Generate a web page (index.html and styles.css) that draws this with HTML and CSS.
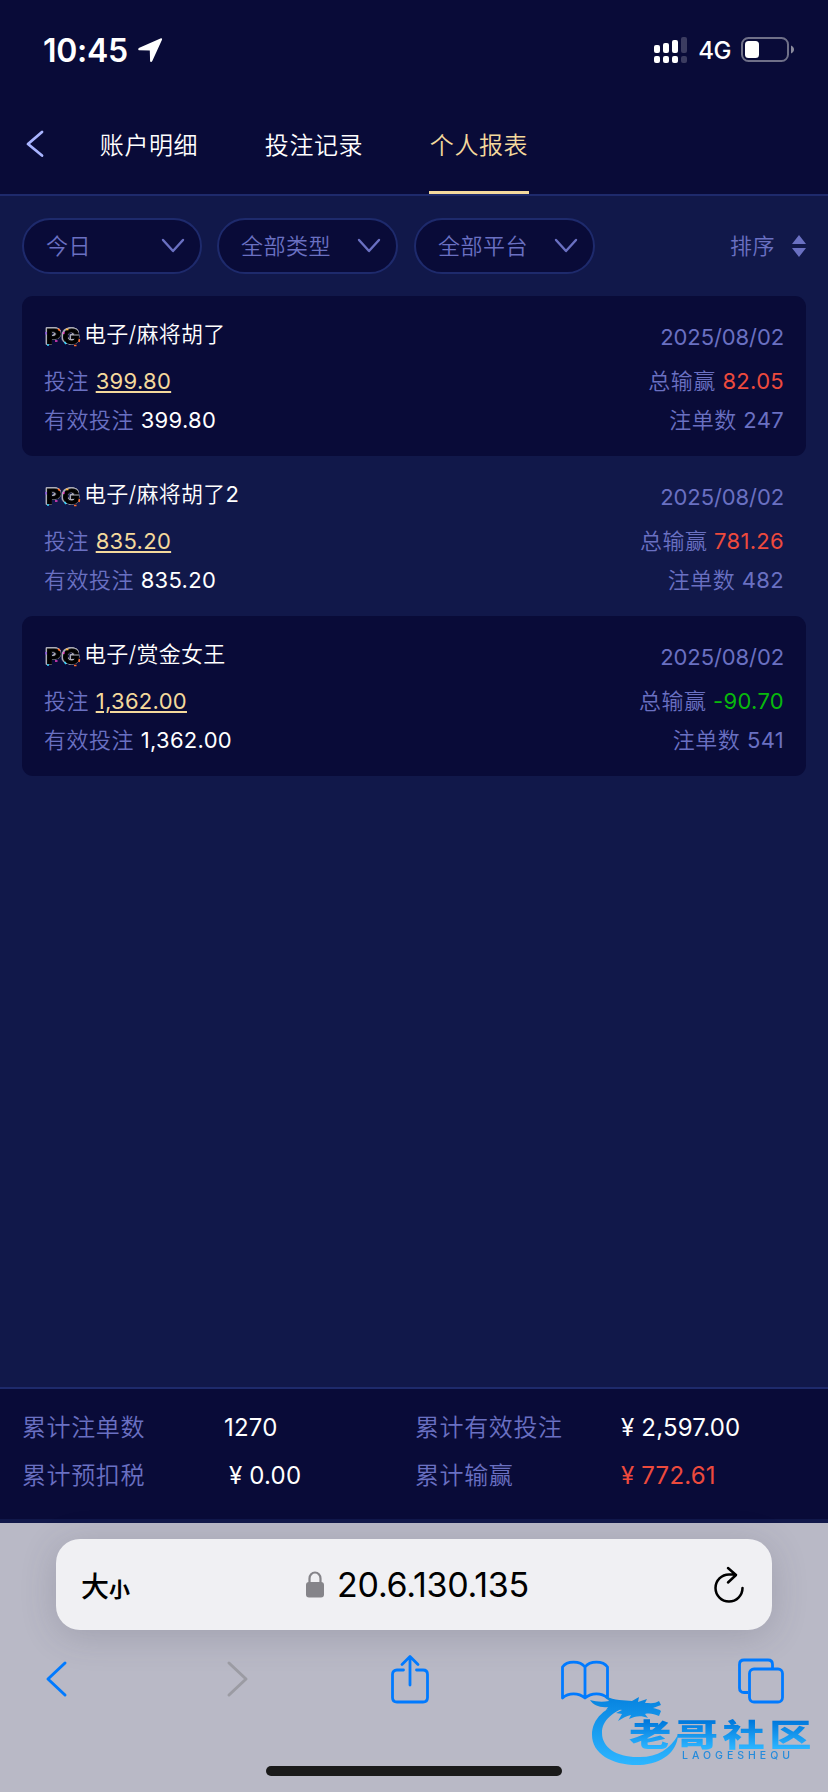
FILE: index.html
```html
<!DOCTYPE html>
<html lang="zh-CN">
<head>
<meta charset="utf-8">
<title>个人报表</title>
<link rel="stylesheet" href="styles.css">
</head>
<body>
<svg class="defs" width="0" height="0" aria-hidden="true">
  <symbol id="sparks" viewBox="0 0 38 22">
    <path d="M2 6v2.500" stroke="#8a4fe0" stroke-width="1.600"/>
    <path d="M14 3l2 1.500M35.500 13l-.500 3M30 19.500h2.500" stroke="#ff6a2a" stroke-width="1.600"/>
    <path d="M3 19h2M20.500 16l1.500 2" stroke="#35d5ff" stroke-width="1.600"/>
    <path d="M11 15h2.500M19.500 8l.500-2" stroke="#f044c4" stroke-width="1.600"/>
    <path d="M22 3.500h2.500" stroke="#ffb03a" stroke-width="1.600"/>
  </symbol>
  <symbol id="down" viewBox="0 0 24 16"><path d="M2 2l10 11L22 2" fill="none" stroke="#6a70c2" stroke-width="2.400" stroke-linecap="round" stroke-linejoin="round"/></symbol>
</svg>

<div class="screen">
  <div class="status">
    <span class="time">10:45</span>
    <svg class="location" width="26" height="26" viewBox="0 0 26 26"><path d="M24 1.200Q25.600 1 25 2.800L15.300 24Q14.500 25.400 13.100 24.600L12.800 13.400L1.800 13.200Q.4 12 1.800 10.900Z" fill="#fff"/></svg>
    <span class="fill"></span>
    <svg class="signal" width="34" height="26" viewBox="0 0 34 26" fill="#fff">
      <rect x="0" y="8" width="6" height="8" rx="2"/><rect x="9" y="6" width="6" height="10" rx="2"/><rect x="18" y="3" width="6" height="13" rx="2"/><rect x="27" y="0" width="6" height="16" rx="2" fill="#3b3c60"/>
      <rect x="0" y="19" width="6" height="7" rx="2"/><rect x="9" y="19" width="6" height="7" rx="2"/><rect x="18" y="19" width="6" height="7" rx="2"/><rect x="27" y="19" width="6" height="7" rx="2" fill="#3b3c60"/>
    </svg>
    <span class="network">4G</span>
    <svg class="battery" width="54" height="26" viewBox="0 0 54 26">
      <rect x="1" y="1" width="46" height="23" rx="6.500" fill="none" stroke="#6f7088" stroke-width="2"/>
      <rect x="4" y="4" width="14" height="17" rx="3.500" fill="#fff"/>
      <path d="M50 8.500c4 1.500 4 6.500 0 8z" fill="#8a8a9c"/>
    </svg>
  </div>

  <nav class="tabs">
    <svg class="back" width="18" height="28" viewBox="0 0 18 28"><path d="M16 2L2 14l14 11.500" fill="none" stroke="#a9b4ff" stroke-width="2.800" stroke-linecap="round" stroke-linejoin="round"/></svg>
    <span class="tab">账户明细</span>
    <span class="tab">投注记录</span>
    <span class="tab active">个人报表</span>
  </nav>

  <div class="filters">
    <div class="pill"><span>今日</span><svg width="24" height="16"><use href="#down"/></svg></div>
    <div class="pill"><span>全部类型</span><svg width="24" height="16"><use href="#down"/></svg></div>
    <div class="pill"><span>全部平台</span><svg width="24" height="16"><use href="#down"/></svg></div>
    <div class="sort"><span>排序</span><svg width="14" height="22" viewBox="0 0 14 22" fill="#6a70c2"><path d="M7 0l7 9H0zM7 22l7-9H0z"/></svg></div>
  </div>

  <main class="list">
    <article class="record dark">
      <div class="left">
        <div class="title"><span class="pg"><i>PG</i><svg width="38" height="22"><use href="#sparks"/></svg></span><span>电子/麻将胡了</span></div>
        <div class="bet">投注 <a>399.80</a></div>
        <div class="valid">有效投注 <b>399.80</b></div>
      </div>
      <div class="right">
        <div class="date">2025/08/02</div>
        <div class="bet">总输赢 <b class="red">82.05</b></div>
        <div class="valid">注单数 <b class="muted">247</b></div>
      </div>
    </article>
    <article class="record">
      <div class="left">
        <div class="title"><span class="pg"><i>PG</i><svg width="38" height="22"><use href="#sparks"/></svg></span><span>电子/麻将胡了<b>2</b></span></div>
        <div class="bet">投注 <a>835.20</a></div>
        <div class="valid">有效投注 <b>835.20</b></div>
      </div>
      <div class="right">
        <div class="date">2025/08/02</div>
        <div class="bet">总输赢 <b class="red">781.26</b></div>
        <div class="valid">注单数 <b class="muted">482</b></div>
      </div>
    </article>
    <article class="record dark">
      <div class="left">
        <div class="title"><span class="pg"><i>PG</i><svg width="38" height="22"><use href="#sparks"/></svg></span><span>电子/赏金女王</span></div>
        <div class="bet">投注 <a>1,362.00</a></div>
        <div class="valid">有效投注 <b>1,362.00</b></div>
      </div>
      <div class="right">
        <div class="date">2025/08/02</div>
        <div class="bet">总输赢 <b class="green">-90.70</b></div>
        <div class="valid">注单数 <b class="muted">541</b></div>
      </div>
    </article>
  </main>

  <section class="summary">
    <span>累计注单数</span><b>1270</b><span>累计有效投注</span><b>¥ 2,597.00</b>
    <span>累计预扣税</span><b class="inset">¥ 0.00</b><span>累计输赢</span><b class="red">¥ 772.61</b>
  </section>

  <footer class="browser">
    <div class="address">
      <span class="size">大<small>小</small></span>
      <span class="url"><svg width="18" height="27" viewBox="0 0 18 27"><path d="M3.500 12V7.500a5.500 6 0 0 1 11 0V12" fill="none" stroke="#858489" stroke-width="2.200"/><rect x="0" y="11" width="18" height="15.500" rx="3" fill="#858489"/></svg>20.6.130.135</span>
      <svg class="reload" width="32" height="38" viewBox="0 0 32 38" fill="none" stroke="#000" stroke-width="2.500" stroke-linecap="round" stroke-linejoin="round"><path d="M29.500 22A13.500 13.500 0 1 1 16 8.500H22.500M15 2l8 7-8 7.500"/></svg>
    </div>
    <div class="toolbar">
      <svg width="24" height="50" viewBox="0 0 24 50"><path d="M20 9L3 25l17 16" fill="none" stroke="#007aff" stroke-width="3" stroke-linecap="round" stroke-linejoin="round"/></svg>
      <svg width="24" height="50" viewBox="0 0 24 50"><path d="M3 9l17 16L3 41" fill="none" stroke="#9b9ba3" stroke-width="3" stroke-linecap="round" stroke-linejoin="round"/></svg>
      <svg width="38" height="50" viewBox="0 0 38 50" fill="none" stroke="#007aff" stroke-width="2.800" stroke-linecap="round" stroke-linejoin="round"><path d="M12.500 16H6q-4.500 0-4.500 4.500v23Q1.500 48 6 48h26q4.500 0 4.500-4.500v-23Q36.500 16 32 16h-6.500M19 31V3M11 10.500L19 2.500l8 8"/></svg>
      <svg width="48" height="50" viewBox="0 0 48 50" fill="none" stroke="#007aff" stroke-width="2.800" stroke-linejoin="round"><path d="M24 13C19 6.500 6 6.500 1.500 13v31c6-5.500 16-5.500 22.500 0 6.500-5.500 16.500-5.500 22.500 0V13C42 6.500 29 6.500 24 13zM24 13v31"/></svg>
      <svg width="46" height="50" viewBox="0 0 46 50" fill="none" stroke="#007aff" stroke-width="2.800"><path d="M10 38.500H6q-4.500 0-4.500-4.500V10.500Q1.500 6 6 6h24q4.500 0 4.500 4.500v4"/><rect x="11.500" y="15" width="33" height="33" rx="4.500"/></svg>
    </div>
    <div class="home"></div>
    <svg class="brand" width="232" height="84" viewBox="0 0 232 84">
      <defs>
        <linearGradient id="wave" gradientUnits="userSpaceOnUse" x1="0" y1="12" x2="0" y2="78"><stop offset="0" stop-color="#0784e0"/><stop offset="1" stop-color="#2cb5ff"/></linearGradient>
        <linearGradient id="word" x1="0" y1="0" x2="0" y2="1"><stop offset=".25" stop-color="#0078dc"/><stop offset=".85" stop-color="#2bb4ff"/></linearGradient>
      </defs>
      <g fill="url(#wave)">
        <path d="M42 17C21 20 8 33 8 49c0 19 21 31 48 30 22-1 37-13 38-30-8 14-20 22-38 22-22 1-38-9-38-24 0-13 11-22 30-28z"/>
        <path d="M6 14c7 2 13 2 19 1l-4-5c10 5 19 4 27 5l7-4-1 5 9-3-2 4c5 0 10 1 14-2l2 4-8 3c3 1 6 1 8 3l-2 5c-5-2-9-3-14-2l3 4c-7-3-13-2-19 1l2-4c-5 1-8 3-13 6l4-7-6-1 6-3-8-2-8 2 2-3c-8 1-15-2-18-7z"/>
      </g>
      <text class="brand-cn" transform="translate(45 59.500) scale(1.320 .960)" fill="url(#word)">老哥社区</text>
      <text class="brand-en" x="98" y="72.500" textLength="108">LAOGESHEQU</text>
    </svg>
  </footer>
</div>
</body>
</html>
```
FILE: styles.css
```css
* { box-sizing: border-box; }
body { margin: 0; background: #11184a; }
.defs { position: absolute; }
.screen {
  width: 828px; height: 1792px; overflow: hidden;
  display: flex; flex-direction: column;
  background: #11184a; color: #fff;
  font-family: Inter, "Noto Sans CJK SC", sans-serif;
  font-size: 22px; font-weight: 350; white-space: nowrap;
}
b { font-weight: 390; }
svg { display: block; flex: none; }

.status { height: 100px; padding: 1px 33px 0 43px; background: #090b38; display: flex; align-items: center; }
.time { font-size: 32px; font-weight: 600; line-height: 40px; letter-spacing: -.3px; }
.location { margin: -1px 0 0 9px; }
.fill { flex: 1; }
.signal, .battery { margin-top: -1px; }
.network { margin: 0 10px; font-size: 24px; font-weight: 450; line-height: 30px; letter-spacing: -.5px; }

.tabs { height: 96px; padding: 0 26px; background: #090b38; border-bottom: 2px solid #1e2a6c; display: flex; }
.back { margin: 30px 55px 0 0; }
.tab { width: 100px; margin-right: 65px; font-size: 24px; letter-spacing: .6px; line-height: 92px; border-bottom: 3px solid transparent; text-align: center; }
.tab.active { color: #f4d99c; border-color: #f4d99c; }

.filters { height: 100px; padding: 22px 22px 0; display: flex; gap: 15px; color: #6a70c2; }
.pill { width: 181px; height: 56px; padding: 0 15px 0 22px; border: 2px solid #1e2a6c; border-radius: 28px; background: #090b38; display: flex; align-items: center; justify-content: space-between; letter-spacing: .5px; }
.pill:first-child { width: 180px; }
.pill:nth-child(3) { margin-left: 1px; }
.pill span, .sort span { padding-bottom: 4px; }
.sort { height: 56px; margin-left: auto; display: flex; align-items: center; gap: 17px; letter-spacing: .5px; }

.list { flex: 1; padding: 0 22px; }
.record { height: 160px; padding: 18px 22px 0 22px; border-radius: 11px; display: flex; justify-content: space-between; color: #6a70c2; letter-spacing: .5px; }
.record.dark { background: #090b38; }
.record b, .bet a { letter-spacing: .3px; }
.right { text-align: right; }
.title { height: 40px; line-height: 40px; color: #fff; display: flex; gap: 2px; letter-spacing: .25px; }
.pg { position: relative; width: 38px; height: 22px; margin-top: 12px; line-height: 22px; }
.pg i {
  display: block; padding-left: 2px; transform: scaleX(1.14); transform-origin: 0 50%;
  font-size: 20px; font-style: normal; font-weight: 800; letter-spacing: 1.200px;
  color: #000; -webkit-text-stroke: .8px #000;
  filter: drop-shadow(.9px 0 #adadb8) drop-shadow(-.9px 0 #adadb8) drop-shadow(0 .9px #adadb8) drop-shadow(0 -.9px #adadb8);
}
.pg svg { position: absolute; left: 0; top: 0; }
.date { height: 40px; padding-top: 3px; line-height: 40px; font-weight: 370; letter-spacing: -.1px; }
.bet { height: 40px; margin-top: 7px; line-height: 40px; }
.valid { line-height: 38px; height: 38px; }
.bet a { color: #f4d99c; font-weight: 390; text-decoration: underline; text-decoration-thickness: 2px; text-underline-offset: 2px; }
.record b { color: #fff; }
.record .red, .summary .red { color: #ed4a3d; }
.record .green { color: #08b90c; }
.record .muted { color: #6a70c2; }

.summary { height: 132px; padding: 15px 22px 21px; border-top: 2px solid #1e2a6c; background: #090b38; display: grid; grid-template-columns: 202px 191px 206px 1fr; grid-template-rows: 48px 48px; line-height: 48px; font-size: 24px; }
.summary span { color: #6a70c2; letter-spacing: .6px; }
.summary b { letter-spacing: .2px; }
.summary .inset { padding-left: 5px; }

.browser { position: relative; height: 269px; margin-top: 4px; padding: 16px 46px 0 56px; background: #b9b9c6; color: #000; }
.address { width: 716px; height: 91px; padding: 0 27px 0 25px; border-radius: 24px; background: #f0f0f3; box-shadow: 0 6px 36px rgba(60, 60, 80, .2); display: flex; align-items: center; justify-content: space-between; }
.size { font-size: 28px; font-weight: 500; }
.size small { font-size: 21px; font-weight: 700; }
.url { display: flex; align-items: center; gap: 13px; margin-left: -8px; font-size: 34px; font-weight: 400; letter-spacing: -.25px; }
.toolbar { height: 50px; margin: 24px 0 0 -11px; display: flex; align-items: center; }
.toolbar svg:nth-child(2) { margin-left: 157px; }
.toolbar svg:nth-child(3) { margin-left: 141px; }
.toolbar svg:nth-child(4) { margin-left: 132px; }
.toolbar svg:nth-child(5) { margin-left: 129px; }
.home { width: 296px; height: 10px; margin: 62px 0 0 210px; border-radius: 5px; background: #1a1a1a; }
.brand { position: absolute; left: 584px; top: 163px; filter: blur(.5px); }
.brand-cn { font-family: "Noto Sans CJK SC", sans-serif; font-size: 32px; font-weight: 900; letter-spacing: 3.400px; }
.brand-en { font-family: Inter, sans-serif; font-size: 10.500px; font-weight: 500; fill: #258bdc; }
```
